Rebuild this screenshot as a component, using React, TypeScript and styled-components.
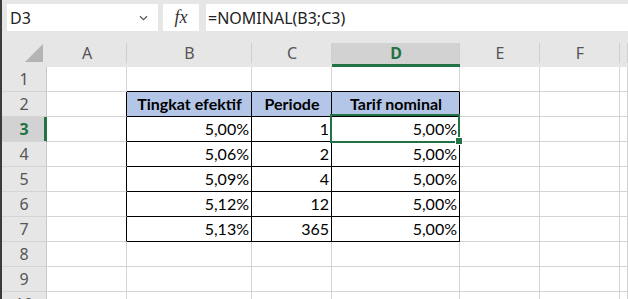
import React from 'react';
import styled, { createGlobalStyle } from 'styled-components';

const GREEN = '#217346';
const GRID = '#d4d4d4';

const GlobalStyle = createGlobalStyle`
  html, body { margin: 0; padding: 0; background: #e6e6e6; overflow: hidden; }
  #root { width: 628px; height: 299px; }
`;

const Window = styled.div`
  display: flex;
  flex-direction: column;
  width: 628px;
  height: 299px;
  box-sizing: border-box;
  border-left: 2px solid #3b3b3b;
  background: #e6e6e6;
  overflow: hidden;
`;

const FormulaBar = styled.div`
  display: flex;
  align-items: flex-start;
  height: 43px;
  flex: none;
  box-sizing: border-box;
  padding: 4px 0 0 5px;
`;

const NameBox = styled.div`
  display: flex;
  align-items: center;
  justify-content: space-between;
  box-sizing: border-box;
  width: 151px;
  height: 27px;
  padding: 0 10px 0 3px;
  background: #fff;
  font-family: 'Noto Sans', sans-serif;
  font-size: 16px;
  color: #222;
`;

const FxButton = styled.div`
  display: flex;
  align-items: center;
  justify-content: center;
  box-sizing: border-box;
  width: 36px;
  height: 27px;
  margin: 0 7px 0 5px;
  background: #fff;
  font-family: 'Liberation Serif', 'Times New Roman', serif;
  font-style: italic;
  font-size: 18px;
  color: #333;
`;

const FormulaInput = styled.div`
  flex: 1;
  display: flex;
  align-items: center;
  box-sizing: border-box;
  height: 27px;
  padding-left: 2px;
  background: #fff;
  font-family: 'Noto Sans', sans-serif;
  font-size: 16px;
  color: #222;
  white-space: nowrap;
`;

const Sheet = styled.div`
  display: grid;
  grid-template-columns: 45px 80px 125px 80px 128px 80px 80px 1fr;
  grid-template-rows: 24px repeat(10, 25px);
  background: #fff;
`;

const Corner = styled.div`
  position: relative;
  box-sizing: border-box;
  background: #e6e6e6;
  &::after {
    content: '';
    position: absolute;
    right: 4px;
    bottom: 5px;
    width: 18px;
    height: 18px;
    background: #b4b4b4;
    clip-path: polygon(100% 0, 100% 100%, 0 100%);
  }
`;

const ColHeader = styled.div<{ $active?: boolean }>`
  position: relative;
  display: flex;
  align-items: center;
  justify-content: center;
  box-sizing: border-box;
  padding-bottom: 4px;
  background: ${(p) => (p.$active ? '#d2d2d2' : '#e6e6e6')};
  box-shadow: ${(p) => (p.$active ? `inset 0 -3px 0 ${GREEN}` : 'none')};
  color: ${(p) => (p.$active ? GREEN : '#555')};
  font-family: 'Noto Sans', sans-serif;
  font-weight: ${(p) => (p.$active ? 700 : 400)};
  font-size: 16px;
  &::after {
    content: '';
    position: absolute;
    right: 0;
    top: 0;
    bottom: 4px;
    width: 1px;
    background: #cfcfcf;
  }
`;

const RowHeader = styled.div<{ $active?: boolean }>`
  display: flex;
  align-items: center;
  justify-content: center;
  box-sizing: border-box;
  border-bottom: 1px solid ${GRID};
  border-right: 1px solid ${(p) => (p.$active ? GREEN : '#c8c8c8')};
  background: ${(p) => (p.$active ? '#d2d2d2' : '#e6e6e6')};
  box-shadow: ${(p) => (p.$active ? `inset -2px 0 0 ${GREEN}` : 'none')};
  color: ${(p) => (p.$active ? GREEN : '#555')};
  font-family: 'Noto Sans', sans-serif;
  font-weight: ${(p) => (p.$active ? 700 : 400)};
  font-size: 16px;
`;

const Cell = styled.div<{
  $right: string;
  $bottom: string;
  $bg: string;
  $align: 'left' | 'right' | 'center';
  $bold?: boolean;
}>`
  position: relative;
  box-sizing: border-box;
  border-right: 1px solid ${(p) => p.$right};
  border-bottom: 1px solid ${(p) => p.$bottom};
  background: ${(p) => p.$bg};
  padding: 0 2px 0 3px;
  text-align: ${(p) => p.$align};
  font-family: Lato, 'Liberation Sans', sans-serif;
  font-size: 16px;
  font-weight: ${(p) => (p.$bold ? 700 : 400)};
  line-height: 24px;
  color: #000;
  white-space: nowrap;
`;

const Selection = styled.div`
  position: absolute;
  left: -2px;
  top: -3px;
  right: -1px;
  bottom: -2px;
  border: 2px solid ${GREEN};
  pointer-events: none;
  z-index: 2;
`;

const FillHandle = styled.div`
  position: absolute;
  right: -3px;
  bottom: -3px;
  width: 6px;
  height: 6px;
  background: ${GREEN};
  box-shadow: 0 0 0 1px #fff;
  z-index: 3;
`;

const Chevron = () => (
  <svg width="9" height="6" viewBox="0 0 9 6" fill="none">
    <path d="M1 1.2 L4.5 4.6 L8 1.2" stroke="#555" strokeWidth="1.2" />
  </svg>
);

const COLS = ['A', 'B', 'C', 'D', 'E', 'F', 'G'];
const HEADER_LABELS = ['A', 'B', 'C', 'D', 'E', 'F', ''];

type CellData = { text: string; align: 'left' | 'right' | 'center'; bold?: boolean };

const rates = ['5,00%', '5,06%', '5,09%', '5,12%', '5,13%'];
const periods = ['1', '2', '4', '12', '365'];

function getCell(row: number, col: number): CellData | null {
  if (row === 2) {
    if (col === 1) return { text: 'Tingkat efektif', align: 'center', bold: true };
    if (col === 2) return { text: 'Periode', align: 'center', bold: true };
    if (col === 3) return { text: 'Tarif nominal', align: 'center', bold: true };
  }
  if (row >= 3 && row <= 7) {
    const i = row - 3;
    if (col === 1) return { text: rates[i], align: 'right' };
    if (col === 2) return { text: periods[i], align: 'right' };
    if (col === 3) return { text: '5,00%', align: 'right' };
  }
  return null;
}

const inTableCols = (c: number) => c >= 1 && c <= 3;

export default function App() {
  const rows = Array.from({ length: 10 }, (_, i) => i + 1);
  return (
    <>
      <GlobalStyle />
      <Window>
        <FormulaBar>
          <NameBox>
            <span>D3</span>
            <Chevron />
          </NameBox>
          <FxButton>fx</FxButton>
          <FormulaInput>=NOMINAL(B3;C3)</FormulaInput>
        </FormulaBar>
        <Sheet>
          <Corner />
          {HEADER_LABELS.map((l, i) => (
            <ColHeader key={`h${i}`} $active={l === 'D'}>
              {l}
            </ColHeader>
          ))}
          {rows.map((r) => (
            <React.Fragment key={r}>
              <RowHeader $active={r === 3}>{r}</RowHeader>
              {COLS.map((_, c) => {
                const data = getCell(r, c);
                const bottomBlack = r >= 1 && r <= 7 && inTableCols(c);
                const rightBlack = r >= 2 && r <= 7 && c >= 0 && c <= 3;
                const isHeader = r === 2 && inTableCols(c);
                const selected = r === 3 && c === 3;
                return (
                  <Cell
                    key={c}
                    $right={rightBlack ? '#000' : GRID}
                    $bottom={bottomBlack ? '#000' : GRID}
                    $bg={isHeader ? '#b4c6e7' : '#fff'}
                    $align={data?.align ?? 'left'}
                    $bold={data?.bold}
                  >
                    {data?.text}
                    {selected && (
                      <>
                        <Selection />
                        <FillHandle />
                      </>
                    )}
                  </Cell>
                );
              })}
            </React.Fragment>
          ))}
        </Sheet>
      </Window>
    </>
  );
}
